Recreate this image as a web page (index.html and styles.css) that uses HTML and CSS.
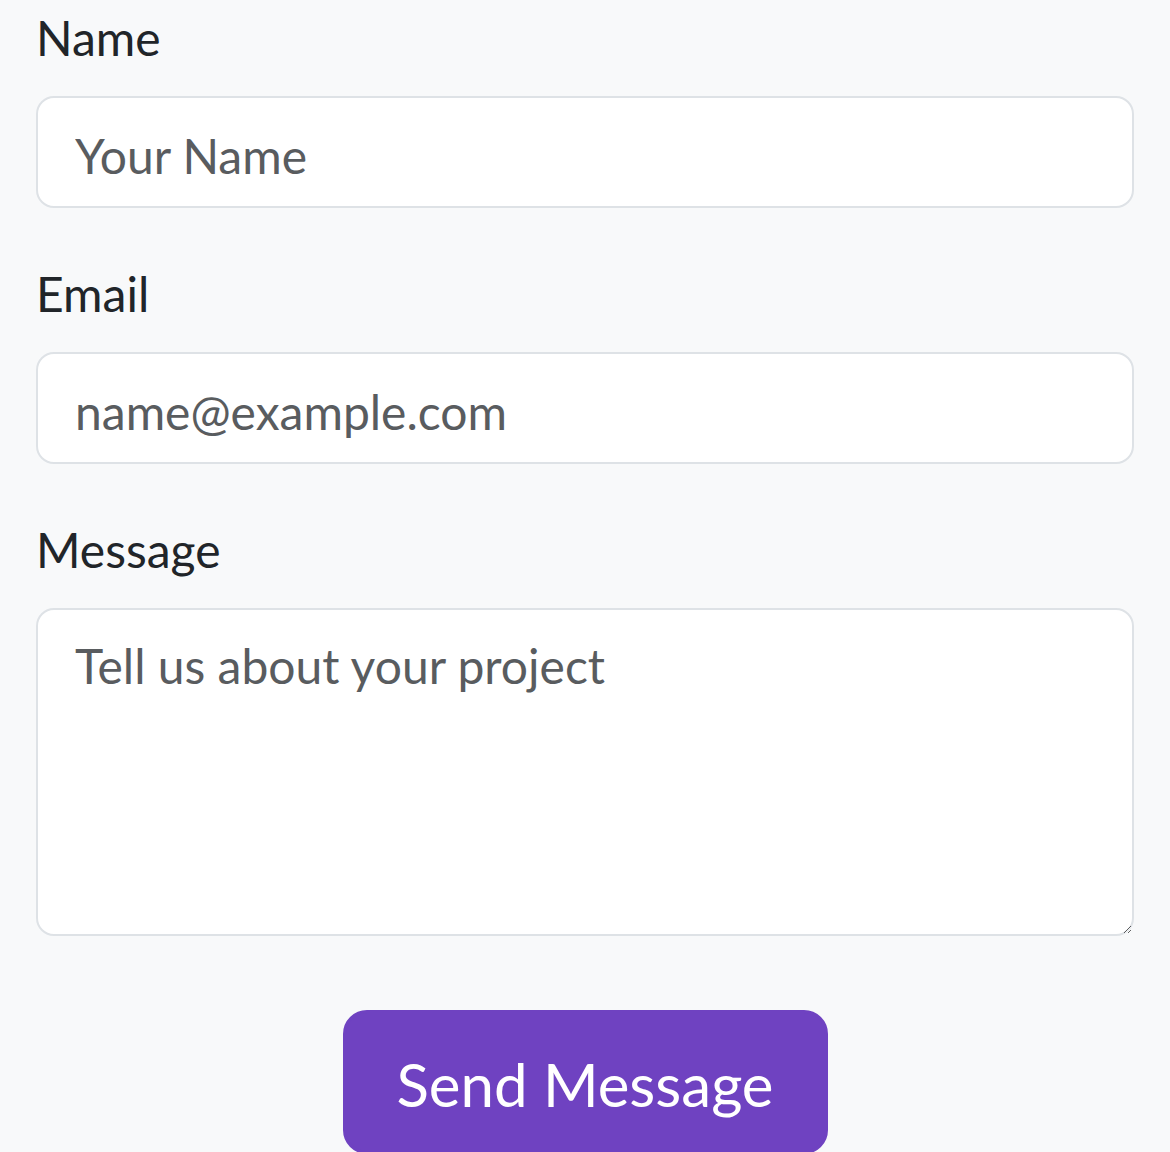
FILE: index.html
```html
<!DOCTYPE html>
<html lang="en">
<head>
<meta charset="utf-8">
<title>Contact</title>
<link rel="stylesheet" href="styles.css">
</head>
<body>
<form class="contact-form">
  <div class="field">
    <label class="field-label" for="name">Name</label>
    <input class="field-input" id="name" type="text" placeholder="Your Name">
  </div>
  <div class="field">
    <label class="field-label" for="email">Email</label>
    <input class="field-input" id="email" type="email" placeholder="name@example.com">
  </div>
  <div class="field">
    <label class="field-label" for="message">Message</label>
    <textarea class="field-input field-textarea" id="message" placeholder="Tell us about your project"></textarea>
  </div>
  <div class="actions">
    <button class="send-btn" type="submit">Send Message</button>
  </div>
</form>
</body>
</html>
```
FILE: styles.css
```css
html, body {
  margin: 0;
  padding: 0;
  background: #f8f9fa;
}
body {
  font-family: Lato, "Noto Sans", sans-serif;
  color: #212529;
}
.contact-form {
  padding: 0 36px;
  display: flex;
  flex-direction: column;
}
.field {
  display: flex;
  flex-direction: column;
  margin-bottom: 48px;
}
.field-label {
  font-size: 48px;
  line-height: 72px;
  padding-top: 2px;
  margin-bottom: 22px;
}
.field-input {
  box-sizing: border-box;
  width: 100%;
  height: 112px;
  margin: 0;
  padding: 20px 37px 14px;
  font-family: inherit;
  font-size: 48px;
  line-height: 72px;
  color: #212529;
  background: #ffffff;
  border: 2px solid #dee2e6;
  border-radius: 18px;
  outline: none;
}
.field-input::placeholder {
  color: #595c5f;
  opacity: 1;
}
.field-textarea {
  height: 328px;
  resize: vertical;
  display: block;
}
.actions {
  display: flex;
  justify-content: center;
  margin-top: 26px;
}
.send-btn {
  box-sizing: border-box;
  width: 485px;
  height: 144px;
  padding: 26px 48px 22px;
  font-family: inherit;
  font-size: 60px;
  line-height: 90px;
  color: #ffffff;
  background: #6f42c1;
  border: 3px solid #6f42c1;
  border-radius: 24px;
}
```
